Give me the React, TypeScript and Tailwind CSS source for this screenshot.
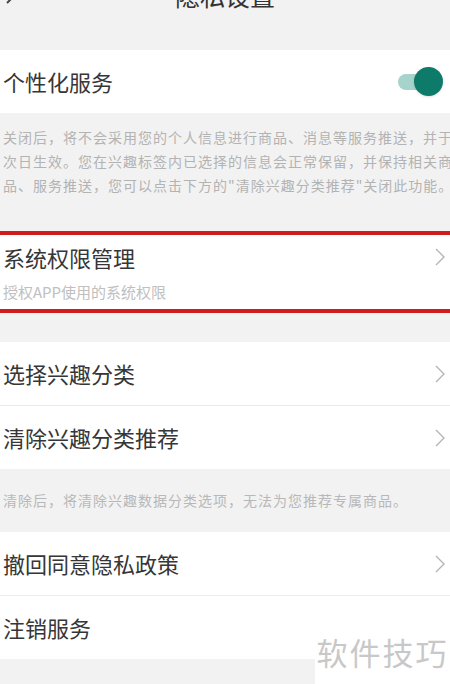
import React from "react";

const font = { fontFamily: '"Noto Sans CJK SC", "Noto Sans", sans-serif' };

function Chevron() {
  return (
    <svg width="12" height="20" viewBox="0 0 12 20" className="shrink-0">
      <path d="M2 2 L10 10 L2 18" fill="none" stroke="#b5b5b5" strokeWidth="1.4" />
    </svg>
  );
}

function Row({ title, chevron = true }: { title: string; chevron?: boolean }) {
  return (
    <div className="flex h-[63px] shrink-0 items-center justify-between bg-white pl-[3px] pr-[4px]">
      <span className="text-[22px] text-[#363636]">{title}</span>
      {chevron && <Chevron />}
    </div>
  );
}

export default function App() {
  return (
    <div className="relative flex h-[684px] w-[450px] flex-col overflow-hidden bg-[#f2f2f2]" style={font}>
      <div className="relative flex h-[50px] shrink-0 flex-col">
        <div className="-mt-[23px] text-center text-[25px] leading-[36px] text-[#333]">隐私设置</div>
        <svg width="14" height="10" viewBox="0 0 14 10" className="absolute left-[4px] top-0">
          <path d="M12 -6 L3 3" fill="none" stroke="#444" strokeWidth="2" />
        </svg>
      </div>

      <div className="flex h-[63px] shrink-0 items-center justify-between bg-white pl-[3px] pr-[7px]">
        <span className="text-[22px] text-[#363636]">个性化服务</span>
        <div className="relative flex h-[30px] w-[45px] items-center">
          <div className="h-[16px] w-[36px] rounded-full bg-[#a6d3cc]" />
          <div className="absolute right-0 h-[29px] w-[29px] rounded-full bg-[#0e7b6a] shadow-sm" />
        </div>
      </div>

      <div className="h-[118px] shrink-0 whitespace-nowrap pl-[3px] pt-[12px] text-[14px] leading-[24px] tracking-[1px] text-[#b3b3b3]">
        <div>关闭后，将不会采用您的个人信息进行商品、消息等服务推送，并于</div>
        <div>次日生效。您在兴趣标签内已选择的信息会正常保留，并保持相关商</div>
        <div>品、服务推送，您可以点击下方的"清除兴趣分类推荐"关闭此功能。</div>
      </div>

      <div className="shrink-0 border-y-4 border-[#d01c1f] bg-white">
        <div className="flex h-[74px] flex-col pl-[3px] pr-[4px] pt-[6px]">
          <div className="flex items-center justify-between">
            <span className="text-[22px] leading-[32px] text-[#363636]">系统权限管理</span>
            <Chevron />
          </div>
          <span className="mt-[9px] text-[15px] leading-[20px] text-[#c0c0c0]">授权APP使用的系统权限</span>
        </div>
      </div>

      <div className="h-[29px] shrink-0" />

      <Row title="选择兴趣分类" />
      <div className="h-px shrink-0 bg-[#ececec]" />
      <Row title="清除兴趣分类推荐" />

      <div className="flex h-[63px] shrink-0 items-center whitespace-nowrap pl-[3px] text-[14px] tracking-[1px] text-[#b8b8b8]">
        清除后，将清除兴趣数据分类选项，无法为您推荐专属商品。
      </div>

      <Row title="撤回同意隐私政策" />
      <div className="h-px shrink-0 bg-[#ececec]" />
      <Row title="注销服务" chevron={false} />

      <div className="absolute bottom-0 right-0 flex h-[50px] w-[135px] items-start justify-center bg-white">
        <span className="-mt-[2px] text-[31px] leading-[40px] tracking-[2px] text-[#c8c8c8]">软件技巧</span>
      </div>
    </div>
  );
}
